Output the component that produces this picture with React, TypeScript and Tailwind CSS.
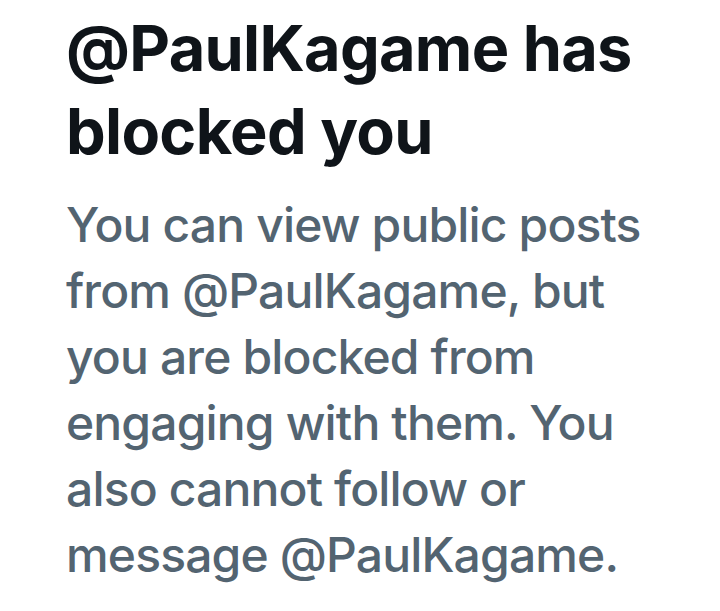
export default function App() {
  return (
    <div className="w-[720px] h-[611px] bg-white overflow-hidden font-['Inter','Liberation_Sans',sans-serif]">
      <div className="pl-[66px] pr-4 pt-[7px]">
        <h1 className="text-[63px] leading-[83px] font-bold text-[#0f1419] tracking-[-0.7px]">
          @PaulKagame has
          <br />
          blocked you
        </h1>
        <p className="mt-[19px] w-[600px] text-[48px] leading-[66px] font-medium text-[#536471] tracking-[-0.85px]">
          You can view public posts from @PaulKagame, but you are blocked from engaging with them. You also cannot follow or message @PaulKagame.
        </p>
      </div>
    </div>
  );
}
